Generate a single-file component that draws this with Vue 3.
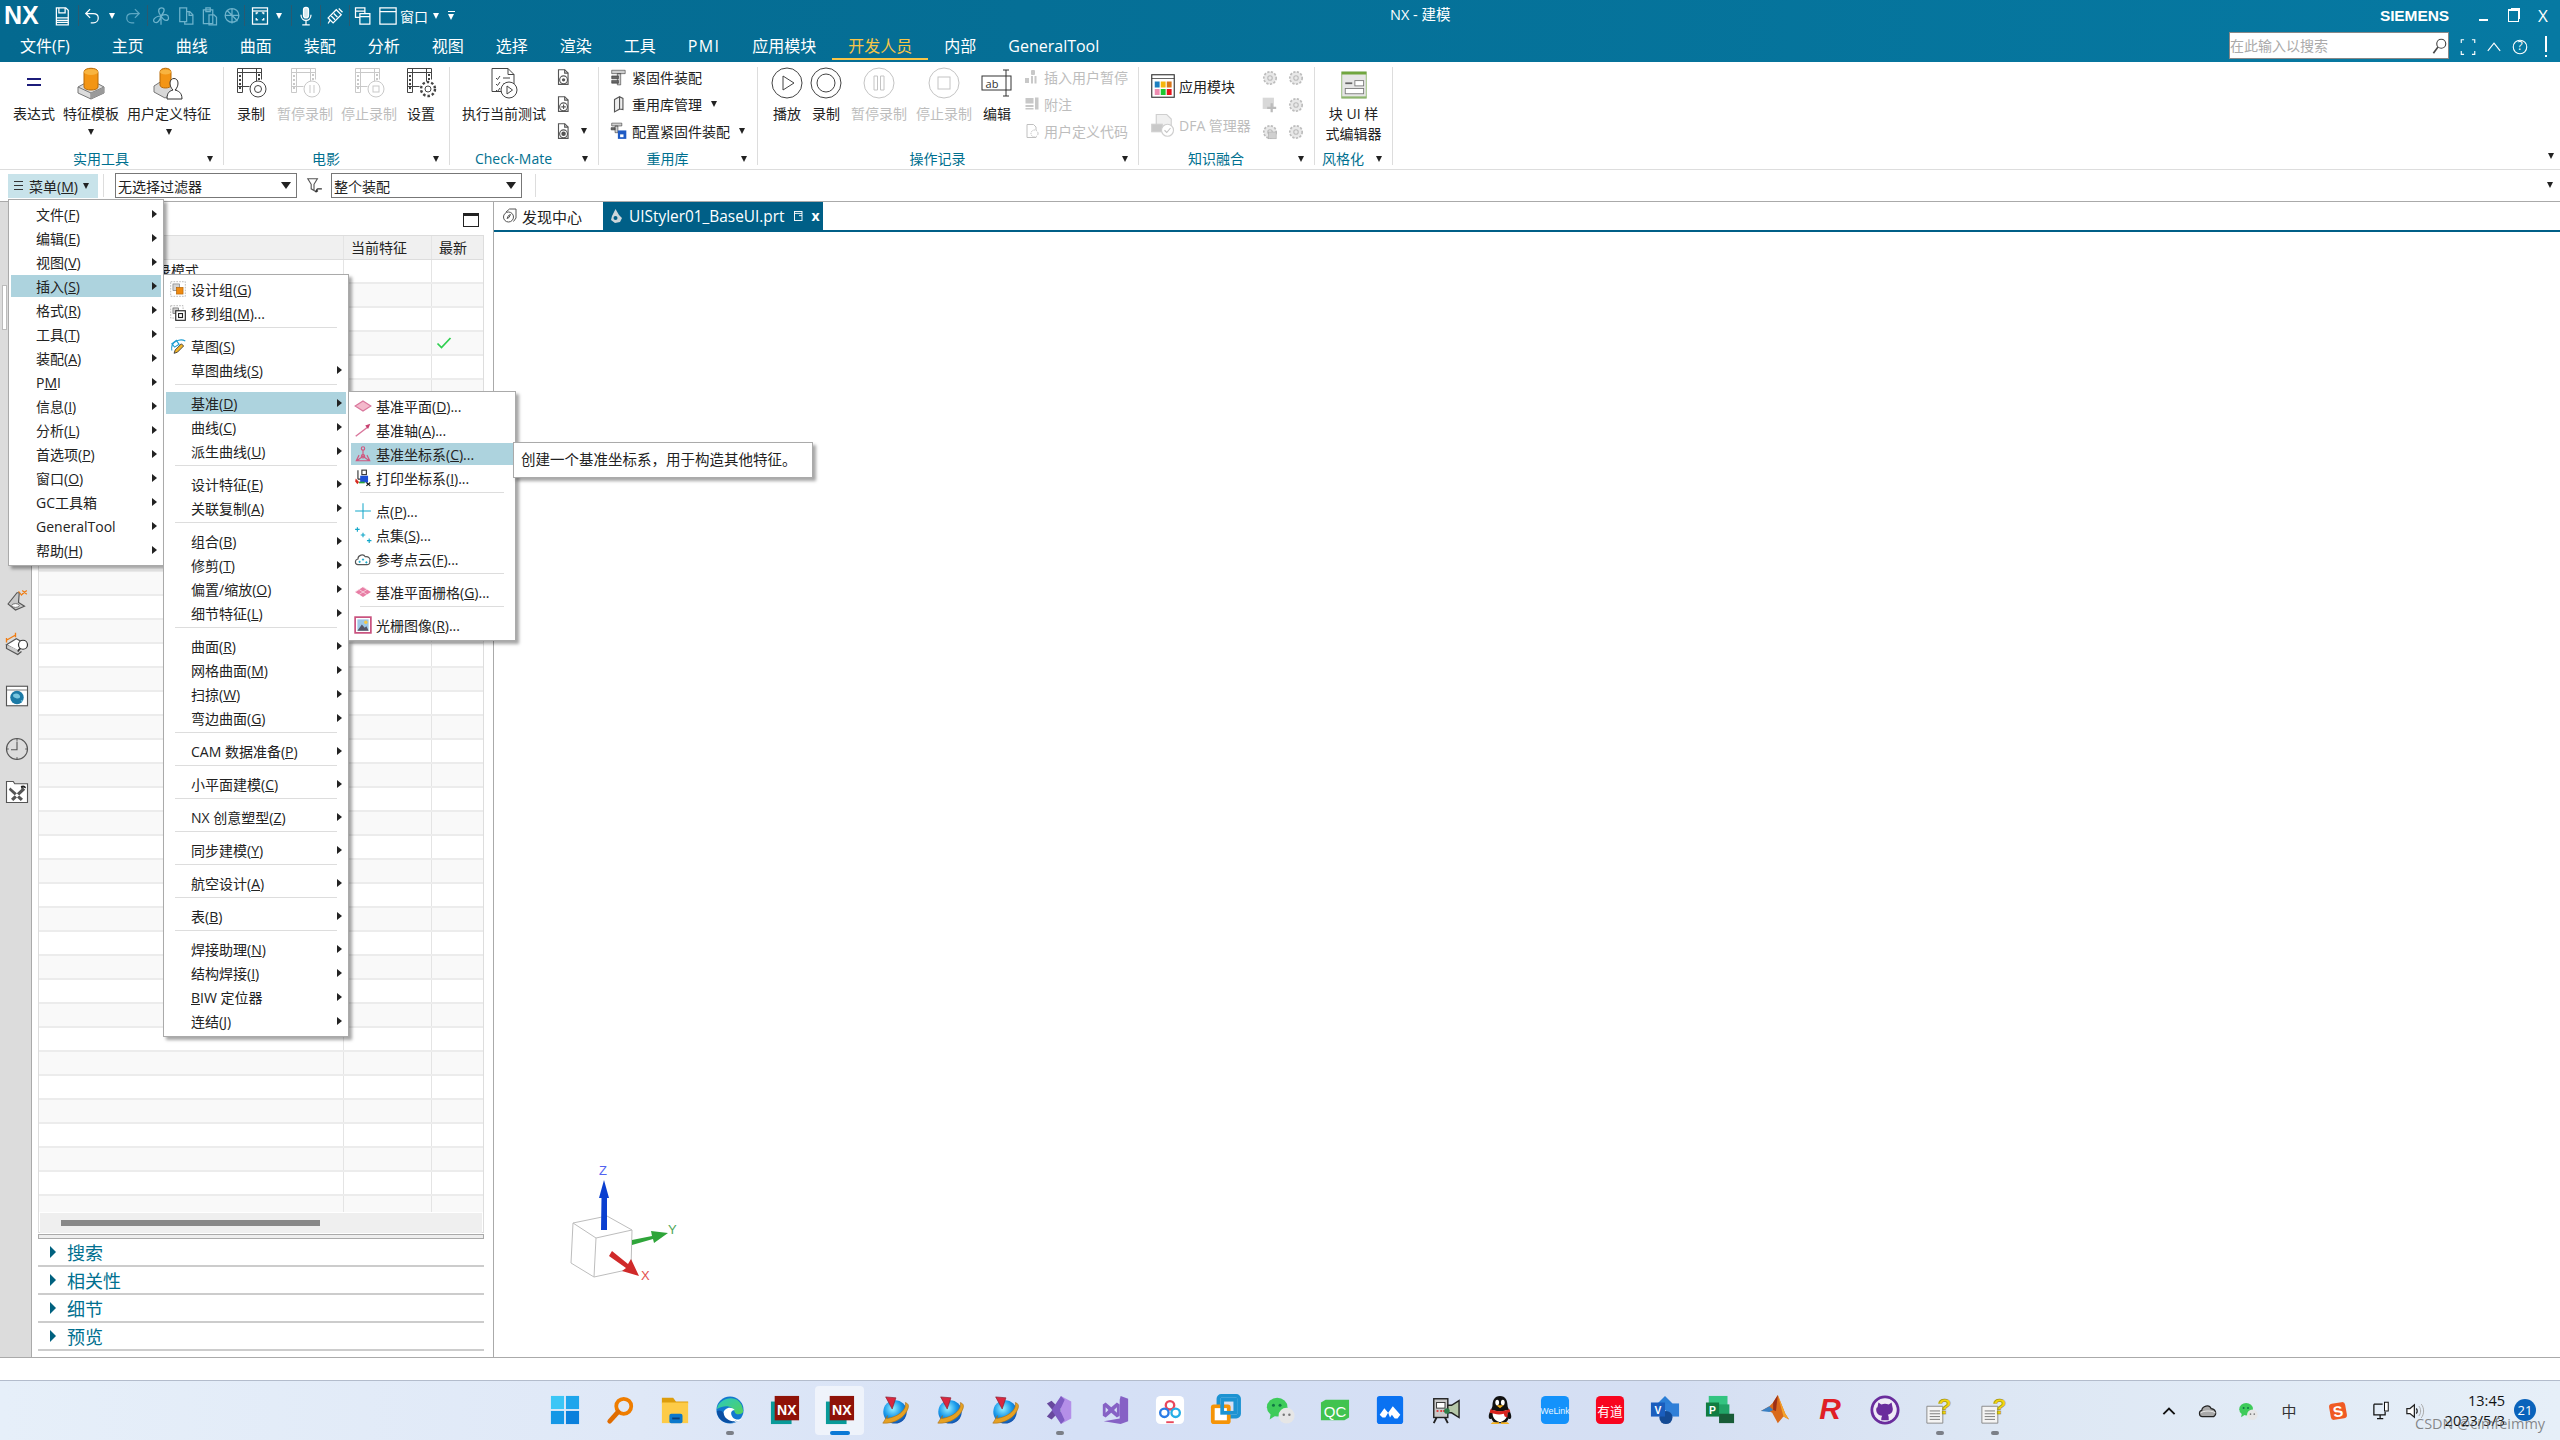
<script setup>
const fontAttr = `font-family="Open Sans, Noto Sans CJK SC, sans-serif"`
const film = (c, badge = '') => `<g fill="none" stroke="${c}" stroke-width="1"><path d="M2.5 1.5h24M2.5 5.5h24M2.5 19.5h12M2.5 1.5v24M7.5 1.5v24M21.5 1.5v13M26.5 1.5v11M2.5 25.5h5"/><path d="M4 9h2M4 13h2M4 17h2M4 21h2M23 8h2M23 12h2" stroke-width="2"/>${badge}</g>`
const doc = (b) => `<g fill="#fff" stroke="#555" stroke-width="2"><path d="M8 3h11l6 6v20H8z"/><path d="M19 3v6h6" fill="none"/><circle cx="17" cy="21" r="7"/></g>${b}`
const gear = (c = '#8a8a8a', b = '') => `<circle cx="16" cy="16" r="11" fill="#e8e8e8" stroke="${c}" stroke-width="3" stroke-dasharray="4 2.5"/><circle cx="16" cy="16" r="4" fill="none" stroke="${c}" stroke-width="2"/>${b}`
const globe = `<defs><radialGradient id="gb" cx=".4" cy=".35" r=".75"><stop offset="0" stop-color="#9cf2ff"/><stop offset=".5" stop-color="#1a9bec"/><stop offset="1" stop-color="#103f9c"/></radialGradient></defs><circle cx="16" cy="18" r="12.5" fill="url(#gb)"/><path d="M3 30c12 1 24-6 27-16 1-3 0-5-3-6 2 8-9 16-20 17l1-3z" fill="#e6a123" stroke="#a66a10" stroke-width=".6"/><path d="M6 2l11 1-4 12z" fill="#d9273f" stroke="#7d1020" stroke-width=".6"/>`
const nxTask = (x = '') => `<rect x="1" y="7" width="22" height="24" fill="#089a99"/><rect x="5" y="1" width="26" height="26" fill="#8f1208"/><text x="18" y="21" text-anchor="middle" font-size="15" font-weight="700" fill="#fff" font-family="Liberation Sans, sans-serif">NX</text>${x}`
const wechat = () => `<ellipse cx="13" cy="13" rx="11" ry="10" fill="#3ecb5a"/><path d="M6 20l-1 6 6-4z" fill="#3ecb5a"/><circle cx="9" cy="11" r="1.6" fill="#174"/><circle cx="16" cy="11" r="1.6" fill="#174"/><circle cx="23" cy="22" r="8.5" fill="#e6e6e6"/><circle cx="20" cy="21" r="1.3" fill="#777"/><circle cx="26" cy="21" r="1.3" fill="#777"/>`

const ic = {
  save: `<g fill="none" stroke="#fff" stroke-width="2"><path d="M7 3h15l4 4v23H7z"/><path d="M11 3v8h10V3M7 19h19M7 23h19M7 26h19"/></g>`,
  undo: `<path d="M13 5 6 12l7 7M6 12h12c5 0 8 3 8 7s-3 8-8 8h-4" fill="none" stroke="#fff" stroke-width="2"/>`,
  redo: `<path d="M19 5l7 7-7 7M26 12H14c-5 0-8 3-8 7s3 8 8 8h4" fill="none" stroke="#5da8c4" stroke-width="2"/>`,
  fan: `<g fill="none" stroke="#6eb3cc" stroke-width="2"><path d="M16 16C10 8 12 3 17 3s6 5-1 13zM16 16c8-4 12-2 12 3s-6 7-12-3zM16 16c-2 8-6 12-10 10s-2-9 10-10zM16 16v14"/></g>`,
  copy: `<g fill="none" stroke="#6eb3cc" stroke-width="2"><path d="M6 3h11v22H6z"/><path d="M17 9h5l5 5v15H14v-4M21 9v6h6"/></g>`,
  paste: `<g fill="none" stroke="#6eb3cc" stroke-width="2"><path d="M7 6h15v22H7z"/><path d="M11 3h7v6h-7zM16 14h8l4 4v12H16z"/></g>`,
  cross: `<g fill="none" stroke="#6eb3cc" stroke-width="2"><path d="M5 15a11 11 0 1 0 22 0a11 11 0 1 0-22 0M16 4v24M5 15h22M9 8l16 16"/></g>`,
  fit: `<g fill="none" stroke="#fff" stroke-width="2"><rect x="4" y="3" width="24" height="26"/><path d="M4 8h24"/><path d="M10 13v-2h3M19 11h3v2M10 19v3h3M22 19v3h-3" /></g>`,
  mic: `<g fill="none" stroke="#fff" stroke-width="2"><rect x="12" y="2" width="8" height="17" rx="4" fill="#d5e8ee"/><path d="M8 14c0 12 16 12 16 0M16 24v6M10 30h12"/></g>`,
  tool: `<g fill="none" stroke="#fff" stroke-width="2"><path d="M5 19 18 6l8 8-13 13zM22 4l6 6M8 23l-3 5"/><path d="M10 16l6 6M14 12l6 6" /></g>`,
  stack: `<g fill="none" stroke="#fff" stroke-width="2"><path d="M4 3h15v15H4zM4 8h15"/><path d="M11 12h16v17H11zM11 17h16" fill="#04739a"/></g>`,
  window: `<g fill="none" stroke="#fff" stroke-width="2"><rect x="3" y="3" width="26" height="26"/><path d="M3 9h26"/></g>`,
  feature: `<path d="M3 20 16 13l13 7v6l-13 6-13-6z" fill="#dcdcdc" stroke="#777"/><path d="M3 20l13 6 13-6M16 26v6" fill="none" stroke="#777"/><path d="M16 26v6l13-6v-6z" fill="#9a9a9a"/><path d="M9 5c0-5 14-5 14 0v15c0 4-14 4-14 0z" fill="#f39514" stroke="#b96a06"/><ellipse cx="16" cy="5" rx="7" ry="3" fill="#f8b440"/>`,
  userfeat: `<path d="M1 19 12 12l11 7v6l-11 6-11-6z" fill="#d8d8d8" stroke="#777"/><path d="M7 5c0-5 11-5 11 0v13c0 4-11 4-11 0z" fill="#f39514" stroke="#b96a06"/><ellipse cx="12.5" cy="5" rx="5.5" ry="2.6" fill="#f8b440"/><path d="M14 32c0-7 3-8 6-9-2-2-3-4-3-7 0-6 8-6 8 0 0 3-1 5-3 7 3 1 7 2 7 9z" fill="#fff" stroke="#333"/>`,
  eq: `<path d="M9 12h14M9 18h14" stroke="#1c1c7a" stroke-width="2"/>`,
  filmRec: film('#444', `<circle cx="23" cy="22" r="8" fill="#fff"/><circle cx="23" cy="22" r="3.5"/>`),
  filmPause: film('#c9c9c9', `<circle cx="23" cy="22" r="8" fill="#fff"/><path d="M21 18v8M25 18v8"/>`),
  filmStop: film('#c9c9c9', `<circle cx="23" cy="22" r="8" fill="#fff"/><rect x="20" y="19" width="6" height="6"/>`),
  filmSet: film('#444', `<circle cx="23" cy="22" r="7" fill="#fff" stroke-width="2.4" stroke-dasharray="2.5 2"/><circle cx="23" cy="22" r="3"/>`),
  checklist: `<g fill="#fff" stroke="#444"><path d="M4 1.5h16l6 6v17H4z"/><path d="M20 1.5v6h6" fill="none"/><path d="M8 11l1.5 1.5L12 9M8 17l1.5 1.5L12 15M8 23l1.5 1.5L12 21M15 11h7M15 17h4" fill="none"/><circle cx="21" cy="23" r="8"/></g><path d="M19 19l5.5 4-5.5 4z" fill="#fff" stroke="#444"/>`,
  docGear: doc(`<circle cx="17" cy="21" r="3" fill="#555"/>`),
  docPlus: doc(`<path d="M17 17v8M13 21h8" stroke="#555" stroke-width="2"/>`),
  docRec: doc(`<circle cx="17" cy="21" r="4" fill="#555"/>`),
  fastener: `<g fill="#666" stroke="#333"><path d="M3 4h24v6H3zM13 10h6v20h-6z" fill="#cfcfcf"/><path d="M3 14h12v5H3zM3 22h12v5H3z"/></g>`,
  reuse: `<g fill="#eee" stroke="#555" stroke-width="2"><path d="M8 8l9-5v22l-9 5zM17 3l6 3v20l-6-1"/></g>`,
  fastConf: `<g fill="#666" stroke="#333"><path d="M3 2h18v5H3zM9 7h5v12H9z" fill="#cfcfcf"/><path d="M2 10h7v4H2z"/></g><rect x="14" y="15" width="15" height="15" fill="#1f5bc4"/><rect x="18" y="22" width="6" height="5" fill="#fff"/>`,
  play: `<circle cx="16" cy="16" r="15" fill="none" stroke="#444"/><path d="M12 9l11 7-11 7z" fill="none" stroke="#444"/>`,
  rec: `<circle cx="16" cy="16" r="15" fill="none" stroke="#444"/><circle cx="16" cy="16" r="9" fill="none" stroke="#444"/>`,
  pause: `<circle cx="16" cy="16" r="15" fill="none" stroke="#c4c4c4"/><path d="M11 9h3.5v14H11zM17.5 9H21v14h-3.5z" fill="none" stroke="#c4c4c4"/>`,
  stop: `<circle cx="16" cy="16" r="15" fill="none" stroke="#c4c4c4"/><rect x="10" y="10" width="12" height="12" fill="none" stroke="#c4c4c4"/>`,
  ab: `<g fill="none" stroke="#333"><rect x="1" y="9" width="29" height="14"/><path d="M22 3h6M25 3v26M22 29h6"/></g><text x="11" y="21" text-anchor="middle" font-size="11" fill="#333" ${fontAttr}>ab</text>`,
  insPause: `<g fill="#c8c8c8"><rect x="14" y="2" width="8" height="10" rx="2"/><rect x="2" y="18" width="8" height="10"/><rect x="14" y="14" width="4" height="15"/><rect x="21" y="14" width="4" height="15"/></g>`,
  note: `<g fill="#c8c8c8"><rect x="3" y="4" width="16" height="11"/><rect x="22" y="3" width="7" height="24"/><rect x="3" y="18" width="16" height="4"/><rect x="3" y="24" width="16" height="3"/></g>`,
  userCode: `<g fill="#fff" stroke="#c0c0c0" stroke-width="2"><path d="M6 3h13l5 5v21H6z"/><circle cx="21" cy="21" r="7" stroke-dasharray="3 2"/></g>`,
  app: `<rect x="1" y="1" width="30" height="30" fill="#fff" stroke="#333" stroke-width="1.5"/><path d="M1 6h30" stroke="#333"/><rect x="5" y="10" width="6.5" height="8" fill="#1d7fc0"/><rect x="13" y="10" width="6.5" height="8" fill="#f5b60d"/><rect x="21" y="10" width="6.5" height="8" fill="#d9771a"/><rect x="5" y="20" width="6.5" height="8" fill="#ee8cb1"/><rect x="13" y="20" width="6.5" height="8" fill="#1cc52f"/><rect x="21" y="20" width="6.5" height="8" fill="#e8141c"/>`,
  dfa: `<g fill="#f0f0f0" stroke="#cfcfcf" stroke-width="1.5"><path d="M7 2h14l6 6v14H7z"/><rect x="1" y="15" width="14" height="10" fill="#c9c9c9"/><circle cx="22" cy="23" r="8" fill="#fff"/></g><path d="M18 23l3 3 5-6" fill="none" stroke="#c4c4c4" stroke-width="1.5"/>`,
  kGear1: gear('#bdbdbd'),
  kPlus: `<rect x="3" y="3" width="20" height="20" fill="#d8d8d8"/><path d="M19 13v16M11 21h16" stroke="#bbb" stroke-width="4"/>`,
  kLock: gear('#bdbdbd', `<rect x="13" y="16" width="14" height="12" fill="#d0d0d0" stroke="#aaa"/>`),
  blockui: `<rect x="2" y="1" width="28" height="30" fill="#e6e6e6" stroke="#8db56e"/><rect x="2" y="1" width="28" height="3" fill="#71a63f"/><rect x="2" y="29" width="28" height="2" fill="#8db56e"/><path d="M6 14h8" stroke="#666" stroke-width="2"/><rect x="17" y="11" width="10" height="6" fill="#fff" stroke="#777"/><rect x="6" y="20" width="21" height="6" fill="#fff" stroke="#777"/>`,
  funnel: `<path d="M5 3h17l-6 10v11l-5-3v-8z" fill="none" stroke="#555" stroke-width="2"/><path d="M30 21h-7c-2 0-3 3-3 6M20 27l-3-3M20 27l3-3" fill="none" stroke="#333" stroke-width="2"/>`,
  discover: `<g fill="none" stroke="#555" stroke-width="2"><circle cx="13" cy="18" r="10"/><path d="M8 8l7-6h13v18l-5 7"/><path d="M10 21l3-6 4-2-3 6z"/></g>`,
  partIcon: `<path d="M15 2l7 12 6 6-4 8-10 2-8-6 2-8z" fill="#cdd6da"/><circle cx="15" cy="20" r="4" fill="#005f87"/>`,
  pinWin: `<g fill="none" stroke="#fff" stroke-width="2.5"><rect x="4" y="4" width="20" height="24"/><path d="M4 9h20M16 15h8"/></g>`,
  check: `<path d="M3 17l8 8L29 6" fill="none" stroke="#2fcf4f" stroke-width="3.5"/>`,
  designGroup: `<rect x="3" y="3" width="26" height="26" fill="#fff" stroke="#888" stroke-dasharray="3 2"/><rect x="7" y="7" width="12" height="12" fill="#d5d5d5" stroke="#666"/><rect x="13" y="13" width="12" height="12" fill="#ef8a10" stroke="#a85c00"/>`,
  moveGroup: `<rect x="3" y="3" width="22" height="22" fill="#fff" stroke="#888" stroke-dasharray="3 2"/><rect x="7" y="7" width="10" height="10" fill="#ccc" stroke="#444"/><rect x="12" y="12" width="17" height="17" fill="#fff" stroke="#222" stroke-width="2"/><rect x="17" y="17" width="7" height="7" fill="none" stroke="#222" stroke-width="2"/>`,
  sketch: `<path d="M5 24C2 8 20 2 29 7" fill="none" stroke="#1d9ed1" stroke-width="2"/><path d="M13 6l-8 6 5 6 8-5z" fill="none" stroke="#1d9ed1" stroke-width="2"/><path d="M9 29l2-6 11-11 4 4-11 11z" fill="#f3b528" stroke="#333" stroke-width="1.5"/>`,
  plane: `<path d="M16 7l14 9-14 9-14-9z" fill="#f3b8cb" stroke="#d9759b" stroke-width="2"/>`,
  axis: `<path d="M3 27 24 11" stroke="#d9759b" stroke-width="2.5"/><path d="M29 5l-9 3 5 6z" fill="#c7406f"/>`,
  csys: `<g fill="none" stroke="#d0577f" stroke-width="2"><circle cx="16" cy="6" r="3"/><path d="M16 9v11L5 28M16 20l11 8M9 18l-5 10h24l-5-10"/><circle cx="16" cy="20" r="3"/></g>`,
  printCsys: `<path d="M7 2v16M7 18h16" stroke="#333" stroke-width="2"/><rect x="14" y="2" width="8" height="8" fill="none" stroke="#333" stroke-width="2"/><path d="M3 17l6 6-3 4-4-5z" fill="#d6291f"/><rect x="11" y="12" width="14" height="12" fill="#1d4fd6"/><path d="M22 24l7 6M29 24l-7 6" stroke="#111" stroke-width="2"/><path d="M9 24h10" stroke="#2aa13c" stroke-width="3"/>`,
  point: `<path d="M16 2v28M2 16h28" stroke="#12a7c9" stroke-width="1.8"/>`,
  points: `<path d="M6 2v8M2 6h8M16 12v8M12 16h8M27 22v8M23 26h8" stroke="#12a7c9" stroke-width="2"/>`,
  cloudPts: `<path d="M7 26C1 26 1 17 7 16c0-7 10-10 13-4 6-1 10 4 8 8 1 4-2 6-5 6z" fill="none" stroke="#555" stroke-width="2"/><path d="M10 19v4M8 21h4M16 15v4M14 17h4M22 20v4M20 22h4" stroke="#12a7c9" stroke-width="1.6"/>`,
  planeGrid: `<path d="M16 7l14 9-14 9-14-9z" fill="#e87ea5"/><path d="M9 11.5l14 9M16 7l7 4.5M9 20.5l14-9M2 16l7-4.5" stroke="#f8d5e1" stroke-width="1.5"/>`,
  raster: `<rect x="2" y="2" width="28" height="28" fill="#fff" stroke="#c8507d" stroke-width="3"/><rect x="6" y="6" width="20" height="20" fill="#9cc6e6"/><path d="M6 26l8-11 5 6 3-3 4 8z" fill="#556"/><circle cx="21" cy="11" r="3" fill="#f6c844"/>`,
  rail1: `<path d="M4 20 16 5h3l-1 13 8 5-12 5z" fill="#c9c9c9" stroke="#555" stroke-width="1.5"/><ellipse cx="14" cy="22" rx="5" ry="2.5" fill="#fff" stroke="#555"/><path d="M18 3l4 5 4-5M23 2l6 5M29 2l-6 5" fill="none" stroke="#ef7d14" stroke-width="1.6"/>`,
  rail2: `<path d="M2 17l13-8 13 7-11 9z" fill="#fff" stroke="#555" stroke-width="1.6"/><path d="M2 17v5l15 8 5-4" fill="#ccc" stroke="#555" stroke-width="1.6"/><path d="M2 11l12-7M2 8v6M14 1v6" stroke="#ef7d14" stroke-width="1.8" fill="none"/><circle cx="24" cy="17" r="6" fill="#fff" stroke="#333" stroke-width="1.6"/><path d="M20 22l-3 4" stroke="#333" stroke-width="2"/>`,
  rail3: `<rect x="2" y="3" width="28" height="26" fill="#fff" stroke="#555" stroke-width="1.5"/><path d="M2 8h28" stroke="#555"/><circle cx="16" cy="18" r="9" fill="#1c7aa6"/><path d="M11 14c4-3 8-1 9 2s-3 4-5 3-5-1-4-5zM21 22l3-1-2 3z" fill="#7ac7e0"/>`,
  rail4: `<circle cx="16" cy="16" r="14" fill="none" stroke="#555" stroke-width="1.5"/><path d="M16 6v11H8M16 2v3M16 27v3M2 16h3M27 16h3" fill="none" stroke="#555" stroke-width="1.5"/>`,
  rail5: `<path d="M2 2h9l2 3h17v25H2z" fill="#fff" stroke="#555" stroke-width="1.5"/><path d="M7 10l17 15-3 3L5 13zM24 10l-16 15 3 3 16-15z" fill="#555"/><path d="M21 8c4-2 7 0 7 3l-4-1-2 2z" fill="#222"/>`,
  /* taskbar */
  win: `<rect x="1" y="1" width="14" height="14" fill="#3bc6f6"/><rect x="17" y="1" width="14" height="14" fill="#1ea5ec"/><rect x="1" y="17" width="14" height="14" fill="#1598e6"/><rect x="17" y="17" width="14" height="14" fill="#0b80dc"/>`,
  tSearch: `<circle cx="20" cy="12" r="8" fill="none" stroke="#ef7d00" stroke-width="4"/><path d="M14 18 5 28" stroke="#e06c00" stroke-width="5" stroke-linecap="round"/>`,
  folder: `<path d="M2 3h12l3 4h13v2H2z" fill="#dd9d0c"/><rect x="2" y="8" width="28" height="22" fill="#fdcb47"/><rect x="10" y="20" width="14" height="10" rx="2" fill="#0b78cc"/><rect x="13" y="24" width="8" height="2" fill="#0a3f78"/>`,
  edge: `<defs><linearGradient id="eg" x1="0" y1="0" x2="1" y2="1"><stop offset="0" stop-color="#2bc8c0"/><stop offset="1" stop-color="#55d25a"/></linearGradient></defs><circle cx="16" cy="16" r="14.5" fill="#1278cf"/><path d="M2 15C4 2 28-3 30 17c0 4-8 5-9 1-1-5-9-9-19-3z" fill="url(#eg)"/><path d="M9 20c0-6 8-9 12-4-4 0-5 4-2 8 3 3 8 3 10 0-4 8-20 6-20-4z" fill="#fff"/><path d="M9 19c1 7 9 11 14 8-5 5-20 4-21-10 2-1 5-1 7 2z" fill="#0a4fa3"/>`,
  nx1: nxTask(),
  globe,
  vs: `<path d="M17 1l11 6v18l-11 6z" fill="#b48fe8"/><path d="M2 9l5-3 10 10 0 0-10 10-5-3 6-7z" fill="#68499e"/><path d="M17 1 7 16l10 15 4-4-5-11 5-11z" fill="#7e5cc2"/>`,
  vs2: `<path d="M22 1l8 3v24l-8 3-18-3 17-3V5z" fill="#8661c5"/><path d="M3 10l3-2 6 5 6-5 3 2v12l-3 2-6-5-6 5-3-2zM6 13v6l3-3zM15 16l3 3v-6z" fill="#8661c5" fill-rule="evenodd"/>`,
  baidu: `<rect x="1" y="1" width="30" height="30" rx="5" fill="#fff"/><circle cx="16" cy="11" r="4.5" fill="none" stroke="#e9475b" stroke-width="2.5"/><circle cx="10" cy="19" r="4.5" fill="none" stroke="#2a7be6" stroke-width="2.5"/><circle cx="22" cy="19" r="4.5" fill="none" stroke="#26aee6" stroke-width="2.5"/><rect x="12" y="28" width="8" height="2" fill="#e9475b"/>`,
  squares: `<rect x="9" y="1" width="22" height="22" rx="3" fill="none" stroke="#1d93d2" stroke-width="4"/><rect x="1" y="10" width="21" height="21" rx="3" fill="#f59408"/><rect x="5" y="14" width="13" height="13" fill="#fff"/><rect x="13" y="5" width="14" height="14" fill="none" stroke="#1d93d2" stroke-width="4"/>`,
  wechat: wechat(),
  qc: `<path d="M1 8l5-3h25v19l-5 3H1z" fill="#41c34f"/><text x="16" y="23" text-anchor="middle" font-size="16" fill="#fff" font-family="Liberation Sans, sans-serif">QC</text>`,
  lanhu: `<rect x="2" y="1" width="28" height="30" rx="3" fill="#0a72f2"/><path d="M5 21l5-7 4 5-3 5H8zM14 19l5-7 8 9-3 4-3 0-3-4-2 3z" fill="#fff"/>`,
  cam: `<rect x="4" y="4" width="15" height="20" fill="#c9c9c9" stroke="#222" stroke-width="1.5"/><rect x="7" y="8" width="9" height="6" fill="#fff" stroke="#333"/><path d="M7 17h2M11 17h2M14 17h2" stroke="#e04040" stroke-width="2"/><path d="M19 11h4l8-5v18l-8-5h-4z" fill="#b5c7a9" stroke="#222" stroke-width="1.5"/><path d="M7 24l-3 6M16 24l3 6" stroke="#222" stroke-width="2"/><circle cx="18" cy="17" r="3" fill="#2f7d4a"/>`,
  qq: `<path d="M16 1c-6 0-8 5-8 10 0 3-4 8-4 12 0 3 2 3 3 2 1 4 4 5 9 5s8-1 9-5c1 1 3 1 3-2 0-4-4-9-4-12 0-5-2-10-8-10z" fill="#111"/><path d="M9 16c2 2 12 2 14 0 2 4 1 11-7 13-8-2-9-9-7-13z" fill="#fff"/><path d="M6 15c5 3 15 3 20 0l1 3-3 1 0 5-3-1-1-3c-3 1-7 1-10 0l-5-1z" fill="#d8221c"/><ellipse cx="13" cy="8" rx="2" ry="3" fill="#fff"/><ellipse cx="19" cy="8" rx="2" ry="3" fill="#fff"/><path d="M12 11h8l-4 3z" fill="#f5b21f"/><path d="M8 29h7v2H6zM17 29h7l2 2h-9z" fill="#f5b21f"/>`,
  welink: `<rect x="1" y="1" width="30" height="30" rx="5" fill="#1392fb"/><text x="16" y="20" text-anchor="middle" font-size="9.5" fill="#e6f5ff" font-family="Liberation Sans, sans-serif">WeLink</text>`,
  youdao: `<rect x="1" y="1" width="30" height="30" rx="5" fill="#f8051f"/><text x="16" y="22" text-anchor="middle" font-size="13.5" fill="#fff" font-family="Noto Sans CJK SC, sans-serif">有道</text>`,
  visio: `<path d="M16 1l8 8-8 8-8-8z" fill="#2b7ed6"/><rect x="17" y="9" width="14" height="14" fill="#2f7fd8"/><circle cx="17" cy="24" r="7" fill="#144a94"/><rect x="1" y="8" width="15" height="15" fill="#1a5dbd"/><text x="8.5" y="20" text-anchor="middle" font-size="11" font-weight="700" fill="#fff" font-family="Liberation Sans, sans-serif">V</text>`,
  project: `<rect x="4" y="1" width="20" height="10" fill="#33c481"/><rect x="12" y="10" width="14" height="11" fill="#21a366"/><rect x="15" y="20" width="16" height="10" fill="#185c37"/><rect x="1" y="8" width="14" height="15" fill="#107c41"/><text x="8" y="20" text-anchor="middle" font-size="11" font-weight="700" fill="#fff" font-family="Liberation Sans, sans-serif">P</text>`,
  matlab: `<path d="M1 17l9-5 4-4 5-8 8 20 4 6-6-3-6 7-6-11-4-2z" fill="#d96a1c"/><path d="M19 0l8 20 4 6-6-3z" fill="#f4a32a"/><path d="M1 17l9-5 4 4-4 2z" fill="#3a80c4"/><path d="M14 8l5-8-2 17-3-1z" fill="#9c2f17"/>`,
  r: `<text x="16" y="26" text-anchor="middle" font-size="32" font-weight="700" font-style="italic" fill="#e01f26" font-family="Liberation Sans, sans-serif">R</text>`,
  github: `<circle cx="16" cy="16" r="14" fill="none" stroke="#6a2c9c" stroke-width="3"/><circle cx="16" cy="16" r="12" fill="#f0eaf6"/><path d="M9 8l3 2c3-1 5-1 8 0l3-2 1 5c1 3 0 7-5 8 1 1 1 3 1 6h-8c0-2 0-3 1-5-2 0-5-1-6-4s0-5 1-5z" fill="#6a2c9c"/>`,
  docq: `<path d="M2 12h17v18H2z" fill="#f4f4f4" stroke="#888"/><path d="M5 17h11M5 20h11M5 23h11M5 26h11" stroke="#777"/><text x="21" y="20" text-anchor="middle" font-size="24" font-weight="700" fill="#f3d60d" stroke="#8a7a00" stroke-width=".5" font-family="Liberation Sans, sans-serif">?</text>`,
  chev: `<path d="M7 21l9-9 9 9" fill="none" stroke="#111" stroke-width="3"/>`,
  cloud: `<path d="M7 25C1 25 1 16 6 15c1-7 12-10 15-3 7 0 10 9 4 13z" fill="#a9a9a9" stroke="#222" stroke-width="2"/><path d="M4 19c6-4 18-4 24 0" stroke="#eee" stroke-width="1.5" fill="none"/>`,
  zhong: `<text x="16" y="25" text-anchor="middle" font-size="24" fill="#333" font-family="Noto Sans CJK SC, sans-serif">中</text>`,
  sogou: `<g transform="rotate(-10 16 16)"><rect x="3" y="3" width="26" height="26" rx="5" fill="#f05a23"/><text x="16" y="25" text-anchor="middle" font-size="24" font-weight="700" fill="#fff" font-family="Liberation Sans, sans-serif">S</text></g>`,
  monitor: `<path d="M3 5h14M3 5v17h18v-5M8 28h10M13 22v6" fill="none" stroke="#111" stroke-width="2"/><rect x="20" y="2" width="6" height="14" fill="#fff" stroke="#111" stroke-width="1.6"/>`,
  speaker: `<path d="M3 12h5l7-6v20l-7-6H3z" fill="#fff" stroke="#222" stroke-width="2"/><path d="M18 12c2 2 2 6 0 8" fill="none" stroke="#222" stroke-width="2"/><path d="M22 8c4 4 4 12 0 16M26 5c5 6 5 16 0 22" fill="none" stroke="#aaa" stroke-width="1.6"/>`
}

const qa = [
  { n: 'save', w: 32 }, { sep: 1 },
  { n: 'undo', w: 26 }, { arrow: 1, w: 14 }, { n: 'redo', w: 28 }, { sep: 1 },
  { n: 'fan', w: 26 }, { n: 'copy', w: 23 }, { n: 'paste', w: 23 }, { n: 'cross', w: 24 }, { sep: 1 },
  { n: 'fit', w: 29 }, { arrow: 1, w: 10 }, { w: 7 }, { sep: 1 },
  { n: 'mic', w: 28 }, { sep: 1 }, { n: 'tool', w: 28 }, { sep: 1 },
  { n: 'stack', w: 26 }, { n: 'window', w: 24 }, { text: '窗口', w: 28 }, { arrow: 1, w: 16 }, { more: 1, w: 14 }
]
const tabs = ['主页', '曲线', '曲面', '装配', '分析', '视图', '选择', '渲染', '工具', 'PMI', '应用模块', '开发人员', '内部', 'GeneralTool']

const menu1 = ['文件(_F)', '编辑(_E)', '视图(_V)', '插入(_S)', '格式(_R)', '工具(_T)', '装配(_A)', 'P_MI', '信息(_I)', '分析(_L)', '首选项(_P)', '窗口(_O)', 'GC工具箱', 'GeneralTool', '帮助(_H)']
  .map((t, i) => ({ t, sub: 1, hl: i === 3 }))
const m = (t, sub = 1, icon = '', hl = false) => ({ t, sub, icon, hl })
const SEP = { sep: 1 }
const menu2 = [
  m('设计组(_G)', 0, 'designGroup'), m('移到组(_M)...', 0, 'moveGroup'), SEP,
  m('草图(_S)', 0, 'sketch'), m('草图曲线(_S)'), SEP,
  m('基准(_D)', 1, '', true), m('曲线(_C)'), m('派生曲线(_U)'), SEP,
  m('设计特征(_E)'), m('关联复制(_A)'), SEP,
  m('组合(_B)'), m('修剪(_T)'), m('偏置/缩放(_O)'), m('细节特征(_L)'), SEP,
  m('曲面(_R)'), m('网格曲面(_M)'), m('扫掠(_W)'), m('弯边曲面(_G)'), SEP,
  m('CAM 数据准备(_P)'), SEP, m('小平面建模(_C)'), SEP, m('NX 创意塑型(_Z)'), SEP, m('同步建模(_Y)'), SEP,
  m('航空设计(_A)'), SEP, m('表(_B)'), SEP,
  m('焊接助理(_N)'), m('结构焊接(_I)'), m('_BIW 定位器'), m('连结(_J)')
]
const menu3 = [
  m('基准平面(_D)...', 0, 'plane'), m('基准轴(_A)...', 0, 'axis'), m('基准坐标系(_C)...', 0, 'csys', true), m('打印坐标系(_I)...', 0, 'printCsys'), SEP,
  m('点(_P)...', 0, 'point'), m('点集(_S)...', 0, 'points'), m('参考点云(_F)...', 0, 'cloudPts'), SEP,
  m('基准平面栅格(_G)...', 0, 'planeGrid'), SEP, m('光栅图像(_R)...', 0, 'raster')
]
const split = (s) => {
  const r = /^(.*?)_(.)(.*)$/.exec(s)
  return r ? [r[1], r[2], r[3]] : [s, '', '']
}
const menus = [
  { cls: 'menu-a', items: menu1 },
  { cls: 'menu-b', items: menu2 },
  { cls: 'menu-c', items: menu3 }
]
const rows = Array.from({ length: 40 }, (_, i) => i)
const task = [
  { n: 'win' }, { n: 'tSearch' }, { n: 'folder' }, { n: 'edge', dot: 1 }, { n: 'nx1' }, { n: 'nx1', active: 1 },
  { n: 'globe' }, { n: 'globe' }, { n: 'globe' }, { n: 'vs', dot: 1 }, { n: 'vs2' }, { n: 'baidu' }, { n: 'squares' },
  { n: 'wechat' }, { n: 'qc' }, { n: 'lanhu' }, { n: 'cam' }, { n: 'qq' }, { n: 'welink' }, { n: 'youdao' },
  { n: 'visio' }, { n: 'project' }, { n: 'matlab' }, { n: 'r' }, { n: 'github' }, { n: 'docq', dot: 1 }, { n: 'docq', dot: 1 }
]
const tray = [
  { n: 'chev', w: 38 }, { n: 'cloud', w: 40 }, { n: 'wechat', w: 40 }, { n: 'zhong', w: 42 },
  { n: 'sogou', w: 56 }, { n: 'monitor', w: 32 }, { n: 'speaker', w: 34 }
]
</script>

<template>
  <div class="app">
    <!-- title + tabs -->
    <header class="head">
      <div class="title-row">
        <span class="nx">NX</span>
        <template v-for="(q, i) in qa" :key="i">
          <span v-if="q.sep" class="qa-sep"></span>
          <span v-else class="qa-slot" :style="{ width: q.w + 'px' }">
            <svg v-if="q.n" class="i20" viewBox="0 0 32 32" v-html="ic[q.n]"></svg>
            <span v-else-if="q.text" class="qa-text">{{ q.text }}</span>
            <span v-else-if="q.arrow" class="tri tri-w"></span>
            <span v-else-if="q.more" class="more"><i></i><span class="tri tri-w"></span></span>
          </span>
        </template>
        <span class="title">NX - 建模</span>
        <span class="siemens">SIEMENS</span>
        <span class="win-btns">
          <span class="wb"><i class="wb-min"></i></span>
          <span class="wb"><i class="wb-max"></i></span>
          <span class="wb wb-x">X</span>
        </span>
      </div>
      <div class="tab-row">
        <span class="tab tab-file">文件(F)</span>
        <span v-for="t in tabs" :key="t" class="tab" :class="{ active: t === '开发人员', pmi: t === 'PMI' }">{{ t }}</span>
        <div class="search">
          <span class="search-text">在此输入以搜索</span>
          <svg class="i18" viewBox="0 0 32 32"><circle cx="20" cy="12" r="8" fill="#fff" stroke="#444" stroke-width="2"/><path d="M14 18 6 29" stroke="#444" stroke-width="3"/></svg>
        </div>
        <span class="hd-ic">
          <svg class="i18" viewBox="0 0 32 32"><path d="M9 3H4v6M23 3h5v6M9 29H4v-6M23 29h5v-6" fill="none" stroke="#fff" stroke-width="2"/></svg>
        </span>
        <span class="hd-ic">
          <svg class="i18" viewBox="0 0 32 32"><path d="M5 23 16 9l11 14" fill="none" stroke="#fff" stroke-width="2"/></svg>
        </span>
        <span class="hd-ic">
          <svg class="i18" viewBox="0 0 32 32"><circle cx="16" cy="16" r="12" fill="none" stroke="#fff" stroke-width="2"/></svg><b class="q">?</b>
        </span>
        <span class="hd-ic bang"><i></i><i></i></span>
      </div>
    </header>

    <!-- ribbon -->
    <section class="ribbon">
      <div class="group g1">
        <div class="g-body">
          <div class="btn w52"><svg class="i32" viewBox="0 0 32 32" v-html="ic.eq"></svg><span>表达式</span></div>
          <div class="btn w62"><svg class="i32" viewBox="0 0 32 32" v-html="ic.feature"></svg><span>特征模板</span><i class="tri"></i></div>
          <div class="btn w94"><svg class="i32" viewBox="0 0 32 32" v-html="ic.userfeat"></svg><span>用户定义特征</span><i class="tri"></i></div>
        </div>
        <div class="g-foot"><span>实用工具</span><i class="tri"></i></div>
      </div>
      <div class="group g2">
        <div class="g-body">
          <div class="btn w38"><svg class="i32" viewBox="0 0 32 32" v-html="ic.filmRec"></svg><span>录制</span></div>
          <div class="btn w70 off"><svg class="i32" viewBox="0 0 32 32" v-html="ic.filmPause"></svg><span>暂停录制</span></div>
          <div class="btn w58 off"><svg class="i32" viewBox="0 0 32 32" v-html="ic.filmStop"></svg><span>停止录制</span></div>
          <div class="btn w46"><svg class="i32" viewBox="0 0 32 32" v-html="ic.filmSet"></svg><span>设置</span></div>
        </div>
        <div class="g-foot"><span>电影</span><i class="tri"></i></div>
      </div>
      <div class="group g3">
        <div class="g-body">
          <div class="btn w92"><svg class="i32" viewBox="0 0 32 32" v-html="ic.checklist"></svg><span>执行当前测试</span></div>
          <div class="rows icons-only">
            <div class="r"><svg class="i18" viewBox="0 0 32 32" v-html="ic.docGear"></svg></div>
            <div class="r"><svg class="i18" viewBox="0 0 32 32" v-html="ic.docPlus"></svg></div>
            <div class="r"><svg class="i18" viewBox="0 0 32 32" v-html="ic.docRec"></svg><i class="tri r-tri"></i></div>
          </div>
        </div>
        <div class="g-foot"><span>Check-Mate</span><i class="tri"></i></div>
      </div>
      <div class="group g4">
        <div class="g-body">
          <div class="rows">
            <div class="r"><span class="slot20"><svg class="i18" viewBox="0 0 32 32" v-html="ic.fastener"></svg></span><span class="rt">紧固件装配</span></div>
            <div class="r"><span class="slot20"><svg class="i18" viewBox="0 0 32 32" v-html="ic.reuse"></svg></span><span class="rt">重用库管理</span><i class="tri r-tri"></i></div>
            <div class="r"><span class="slot20"><svg class="i18" viewBox="0 0 32 32" v-html="ic.fastConf"></svg></span><span class="rt">配置紧固件装配</span><i class="tri r-tri"></i></div>
          </div>
        </div>
        <div class="g-foot"><span>重用库</span><i class="tri"></i></div>
      </div>
      <div class="group g5">
        <div class="g-body">
          <div class="btn w44"><svg class="i32" viewBox="0 0 32 32" v-html="ic.play"></svg><span>播放</span></div>
          <div class="btn w34"><svg class="i32" viewBox="0 0 32 32" v-html="ic.rec"></svg><span>录制</span></div>
          <div class="btn w72 off"><svg class="i32" viewBox="0 0 32 32" v-html="ic.pause"></svg><span>暂停录制</span></div>
          <div class="btn w58 off"><svg class="i32" viewBox="0 0 32 32" v-html="ic.stop"></svg><span>停止录制</span></div>
          <div class="btn w48"><svg class="i32" viewBox="0 0 32 32" v-html="ic.ab"></svg><span>编辑</span></div>
          <div class="rows off small-rows">
            <div class="r"><svg class="i16" viewBox="0 0 32 32" v-html="ic.insPause"></svg><span class="rt">插入用户暂停</span></div>
            <div class="r"><svg class="i16" viewBox="0 0 32 32" v-html="ic.note"></svg><span class="rt">附注</span></div>
            <div class="r"><svg class="i16" viewBox="0 0 32 32" v-html="ic.userCode"></svg><span class="rt">用户定义代码</span></div>
          </div>
        </div>
        <div class="g-foot"><span>操作记录</span><i class="tri"></i></div>
      </div>
      <div class="group g6">
        <div class="g-body">
          <div class="know">
            <div class="kn"><svg class="i24" viewBox="0 0 32 32" v-html="ic.app"></svg><span>应用模块</span></div>
            <div class="kn off"><svg class="i24" viewBox="0 0 32 32" v-html="ic.dfa"></svg><span>DFA 管理器</span></div>
          </div>
          <div class="kgrid">
            <svg class="i18" viewBox="0 0 32 32" v-html="ic.kGear1"></svg>
            <svg class="i18" viewBox="0 0 32 32" v-html="ic.kGear1"></svg>
            <svg class="i18" viewBox="0 0 32 32" v-html="ic.kPlus"></svg>
            <svg class="i18" viewBox="0 0 32 32" v-html="ic.kGear1"></svg>
            <svg class="i18" viewBox="0 0 32 32" v-html="ic.kLock"></svg>
            <svg class="i18" viewBox="0 0 32 32" v-html="ic.kGear1"></svg>
          </div>
        </div>
        <div class="g-foot"><span>知识融合</span><i class="tri"></i></div>
      </div>
      <div class="group g7">
        <div class="g-body">
          <div class="btn w77"><svg class="i32 ui-ic" viewBox="0 0 32 32" v-html="ic.blockui"></svg><span>块 UI 样<br />式编辑器</span></div>
        </div>
        <div class="g-foot"><span>风格化</span><i class="tri"></i></div>
      </div>
      <i class="tri rib-end"></i>
    </section>

    <!-- selection bar -->
    <section class="selbar">
      <div class="menu-btn"><span class="burger"><i></i><i></i><i></i></span><span>菜单(<u>M</u>)</span><i class="tri"></i></div>
      <span class="sel-sep"></span>
      <div class="select s1"><span>无选择过滤器</span><i class="tri tri-l"></i></div>
      <svg class="i22 funnel" viewBox="0 0 32 32" v-html="ic.funnel"></svg>
      <div class="select s2"><span>整个装配</span><i class="tri tri-l"></i></div>
      <span class="sel-sep s3"></span>
      <i class="tri sel-end"></i>
    </section>

    <!-- main -->
    <main class="main">
      <aside class="rail">
        <span class="stub"></span>
        <svg class="i24 rc" viewBox="0 0 32 32" v-html="ic.rail4"></svg>
        <svg class="i24 r1" viewBox="0 0 32 32" v-html="ic.rail1"></svg>
        <svg class="i24 r2" viewBox="0 0 32 32" v-html="ic.rail2"></svg>
        <svg class="i24 r3" viewBox="0 0 32 32" v-html="ic.rail3"></svg>
        <svg class="i24 r4" viewBox="0 0 32 32" v-html="ic.rail4"></svg>
        <svg class="i24 r5" viewBox="0 0 32 32" v-html="ic.rail5"></svg>
      </aside>
      <section class="panel">
        <div class="panel-top"><span class="max-ic"></span></div>
        <div class="table">
          <div class="t-head"><span class="c1"></span><span class="c2">当前特征</span><span class="c3">最新</span></div>
          <div class="t-body">
            <div v-for="i in rows" :key="i" class="t-row" :class="{ odd: i % 2 === 1 }">
              <span class="c1"><template v-if="i === 0">历史记录模式</template></span>
              <span class="c2"></span>
              <span class="c3"><svg v-if="i === 3" class="i16" viewBox="0 0 32 32" v-html="ic.check"></svg></span>
            </div>
          </div>
          <div class="t-scroll"><span></span></div>
        </div>
        <div class="splitter"></div>
        <div v-for="s in ['搜索', '相关性', '细节', '预览']" :key="s" class="sect"><i></i><span>{{ s }}</span></div>
      </section>
      <section class="canvas">
        <div class="doc-tabs">
          <div class="dt"><svg class="i16" viewBox="0 0 32 32" v-html="ic.discover"></svg><span>发现中心</span></div>
          <div class="dt on">
            <svg class="i16" viewBox="0 0 32 32" v-html="ic.partIcon"></svg><span>UIStyler01_BaseUI.prt</span>
            <svg class="i12" viewBox="0 0 32 32" v-html="ic.pinWin"></svg><b>x</b>
          </div>
        </div>
        <svg class="triad" viewBox="0 0 120 130">
          <g fill="none" stroke="#bdbdbd" stroke-width="1">
            <path d="M9 67 43 60 68 74 32 82ZM9 67 7 107 30 121 32 82M30 121 67 113 68 74"/>
          </g>
          <path d="M40 24 35 42 37.500 42 37 74 43 74 43 42 45 42Z" fill="#0a3fd0"/>
          <path d="M68 84 88 80 87 75 104 77 90 87 89 83 68 89Z" fill="#2fa53a"/>
          <path d="M48 95 64 108 67 103 75 120 58 115 62 112 45 100Z" fill="#d02a2a"/>
          <text x="35" y="19" font-size="13" fill="#5263f0" font-family="Liberation Sans, sans-serif">Z</text>
          <text x="104" y="78" font-size="13" fill="#4fa85a" font-family="Liberation Sans, sans-serif">Y</text>
          <text x="77" y="124" font-size="13" fill="#e25050" font-family="Liberation Sans, sans-serif">X</text>
        </svg>
      </section>
    </main>
    <div class="status"></div>

    <!-- taskbar -->
    <footer class="taskbar">
      <div class="t-slot" v-for="(t, i) in task" :key="i" :class="{ active: t.active }">
        <svg class="i30" viewBox="0 0 32 32" v-html="ic[t.n]"></svg>
        <i v-if="t.dot" class="dot"></i>
        <i v-if="t.active" class="bar"></i>
      </div>
      <div class="tray">
        <span v-for="t in tray" :key="t.n" class="tr" :style="{ width: t.w + 'px' }">
          <svg class="i20" viewBox="0 0 32 32" v-html="ic[t.n]"></svg>
        </span>
        <div class="clock"><span>13:45</span><span>2023/5/3</span></div>
        <span class="badge">21</span>
      </div>
      <span class="mark">CSDN @cimfeimmy</span>
    </footer>

    <!-- cascading menus -->
    <div v-for="mn in menus" :key="mn.cls" class="menu" :class="mn.cls">
      <template v-for="(it, i) in mn.items" :key="i">
        <div v-if="it.sep" class="m-sep"></div>
        <div v-else class="m-item" :class="{ hl: it.hl }">
          <span class="m-icon"><svg v-if="it.icon" class="i18" viewBox="0 0 32 32" v-html="ic[it.icon]"></svg></span>
          <span class="m-text">{{ split(it.t)[0] }}<u>{{ split(it.t)[1] }}</u>{{ split(it.t)[2] }}</span>
          <i v-if="it.sub" class="tri-r"></i>
        </div>
      </template>
    </div>
    <div class="tip">创建一个基准坐标系，用于构造其他特征。</div>
  </div>
</template>

<style>
html, body { margin: 0; background: #fff; }
</style>

<style scoped>
.app { position: relative; width: 2560px; height: 1440px; overflow: hidden; display: flex; flex-direction: column; font-family: "Open Sans", "Noto Sans CJK SC", sans-serif; font-size: 14px; color: #222; background: #fff; }
svg { display: block; flex: none; overflow: visible; }
.i12 { width: 12px; height: 12px; } .i16 { width: 16px; height: 16px; } .i18 { width: 18px; height: 18px; }
.i20 { width: 20px; height: 20px; } .i22 { width: 22px; height: 22px; } .i24 { width: 24px; height: 24px; }
.i30 { width: 30px; height: 30px; } .i32 { width: 32px; height: 32px; }
.tri { display: block; width: 0; height: 0; border-left: 3.5px solid transparent; border-right: 3.5px solid transparent; border-top: 6px solid #222; flex: none; }
.tri-w { border-top-color: #fff; }
.tri-l { border-left-width: 5px; border-right-width: 5px; border-top-width: 7px; }
.tri-r { display: block; width: 0; height: 0; border-top: 4.5px solid transparent; border-bottom: 4.5px solid transparent; border-left: 5px solid #222; margin-left: auto; margin-right: 4px; flex: none; }

.head { height: 62px; flex: none; background: linear-gradient(90deg, #04698f 0%, #056f96 40%, #0679a2 100%); color: #fff; }
.title-row { height: 31px; display: flex; align-items: center; position: relative; }
.nx { width: 46px; padding-left: 4px; box-sizing: border-box; font: 700 25px/31px "Liberation Sans", sans-serif; flex: none; }
.qa-sep { width: 1px; height: 21px; background: #2a5a70; flex: none; }
.qa-slot { display: flex; align-items: center; justify-content: center; height: 31px; flex: none; }
.qa-text { font-size: 14px; }
.more { display: flex; flex-direction: column; align-items: center; gap: 2px; }
.more i { display: block; width: 7px; height: 1px; background: #fff; }
.title { position: absolute; left: 1390px; top: 5px; font-size: 14.5px; line-height: 20px; }
.siemens { margin-left: auto; font: 700 15.5px/31px "Liberation Sans", sans-serif; letter-spacing: -.1px; }
.win-btns { display: flex; margin-left: 19px; margin-right: 2px; }
.wb { width: 30px; height: 31px; display: flex; align-items: center; justify-content: center; font-size: 18px; }
.wb-min { display: block; width: 9px; height: 2px; background: #fff; margin-top: 9px; }
.wb-max { display: block; width: 9px; height: 10px; border: 1px solid #fff; border-top-width: 2px; box-shadow: 2px -2px 0 -1px #fff; }
.wb-x { font-size: 17px; }
.tab-row { height: 31px; display: flex; align-items: stretch; padding-left: 4px; }
.tab { padding: 0 16px; font-size: 16px; line-height: 30px; box-sizing: border-box; height: 29px; flex: none; }
.tab-file { margin-right: 10px; }
.tab.pmi { letter-spacing: 1.3px; }
.tab.active { color: #f7c548; border-bottom: 2px solid #f7c548; }
.search { margin-left: auto; width: 218px; height: 25px; margin-top: 1px; background: #fff; border: 1px solid #888; box-sizing: content-box; display: flex; align-items: center; justify-content: space-between; }
.search-text { color: #aaa; font-size: 14px; line-height: 25px; }
.hd-ic { width: 26px; height: 31px; display: flex; align-items: center; justify-content: center; position: relative; flex: none; }
.hd-ic .q { position: absolute; left: 0; right: 0; top: 5px; text-align: center; font-size: 12px; font-weight: 400; line-height: 20px; }
.search + .hd-ic { margin-left: 6px; }
.bang { flex-direction: column; gap: 3px; margin-right: 1px; }
.bang i { display: block; width: 2px; height: 16px; background: #fff; }
.bang i:last-child { height: 2px; }

.ribbon { height: 102px; flex: none; border-bottom: 1px solid #ddd; display: flex; padding-top: 5px; box-sizing: content-box; position: relative; }
.group { box-sizing: border-box; border-right: 1px solid #ddd; height: 98px; display: flex; flex-direction: column; flex: none; }
.g1 { width: 224px; } .g2 { width: 226px; } .g3 { width: 149px; } .g4 { width: 159px; } .g5 { width: 381px; } .g6 { width: 176px; } .g7 { width: 78px; }
.g-body { height: 85px; display: flex; align-items: flex-start; }
.g1 .g-body { padding-left: 8px; } .g2 .g-body { padding-left: 8px; } .g3 .g-body { padding-left: 8px; }
.g4 .g-body { padding-left: 10px; } .g5 .g-body { padding-left: 7px; } .g6 .g-body { padding-left: 12px; }
.g-foot { height: 13px; display: flex; align-items: center; }
.g-foot span { flex: 1; text-align: center; color: #00708f; font-size: 14px; line-height: 13px; white-space: nowrap; }
.g-foot .tri { margin: 0 10px 0 5px; }
.btn { display: flex; flex-direction: column; align-items: center; flex: none; text-align: center; white-space: nowrap; line-height: 20px; }
.btn svg { margin-bottom: 5px; }
.btn .tri { margin-top: 5px; }
.ui-ic { width: 28px; height: 28px; margin-top: 4px; }
.w34 { width: 34px; } .w38 { width: 38px; } .w44 { width: 44px; } .w46 { width: 46px; } .w48 { width: 48px; } .w52 { width: 52px; }
.w58 { width: 58px; } .w62 { width: 62px; } .w70 { width: 70px; } .w72 { width: 72px; } .w77 { width: 77px; } .w92 { width: 92px; } .w94 { width: 94px; }
.off { color: #bdbdbd; }
.rows { margin-top: -4px; display: flex; flex-direction: column; }
.r { height: 27px; display: flex; align-items: center; white-space: nowrap; }
.icons-only { margin-left: 4px; }
.r-tri { margin-left: 9px; }
.slot20 { width: 20px; display: flex; justify-content: center; margin-right: 3px; }
.small-rows { margin-left: 3px; }
.small-rows .rt { margin-left: 4px; }
.know { width: 106px; padding-top: 7px; display: flex; flex-direction: column; gap: 15px; }
.kn { display: flex; align-items: center; gap: 4px; height: 24px; white-space: nowrap; }
.kgrid { display: grid; grid-template-columns: 26px 26px; grid-auto-rows: 27px; margin-top: -3px; justify-items: center; align-items: center; }
.rib-end { position: absolute; right: 6px; top: 91px; }

.selbar { height: 31px; flex: none; border-bottom: 1px solid #aaa; display: flex; align-items: center; position: relative; }
.menu-btn { margin-left: 8px; width: 90px; height: 24px; background: #c8e3ea; display: flex; align-items: center; flex: none; box-sizing: border-box; padding-left: 6px; }
.burger { display: flex; flex-direction: column; gap: 3px; margin-right: 6px; }
.burger i { display: block; width: 9px; height: 1px; background: #333; }
.menu-btn .tri { margin-left: 5px; }
.sel-sep { width: 1px; height: 23px; background: #ddd; margin-left: 5px; flex: none; }
.select { box-sizing: border-box; height: 25px; border: 1px solid #777; display: flex; align-items: center; justify-content: space-between; padding: 0 5px 0 2px; flex: none; }
.s1 { width: 182px; margin-left: 11px; } .s2 { width: 191px; margin-left: 0; }
.funnel { margin: 0 8px; width: 18px; height: 18px; }
.s3 { margin-left: 13px; }
.sel-end { position: absolute; right: 7px; top: 12px; }

.main { flex: none; height: 1156px; display: flex; border-bottom: 1px solid #aaa; box-sizing: border-box; }
.rail { width: 32px; box-sizing: border-box; background: #dcdcdc; border-right: 1px solid #aaa; display: flex; flex-direction: column; flex: none; align-items: flex-end; padding-right: 2px; }
.stub { width: 5px; height: 45px; background: #fff; border: 1px solid #bbb; box-sizing: border-box; margin-top: 83px; align-self: flex-start; margin-left: 2px; }
.rc { margin-top: 222px; width: 13px; height: 13px; }
.r1 { margin-top: 24px; } .r2 { margin-top: 19px; } .r3 { margin-top: 28px; } .r4 { margin-top: 29px; } .r5 { margin-top: 19px; }
.panel { width: 462px; box-sizing: border-box; border-right: 1px solid #aaa; padding-left: 6px; padding-right: 9px; flex: none; }
.panel-top { height: 33px; position: relative; display: flex; justify-content: flex-end; }
.max-ic { display: block; width: 14px; height: 10px; border: 1px solid #222; border-top-width: 3px; margin: 11px 5px 0 0; box-sizing: content-box; }
.table { border: 1px solid #ddd; box-sizing: border-box; height: 998px; }
.t-head { height: 23px; background: #f0f0f0; display: flex; border-bottom: 1px solid #ddd; line-height: 23px; font-size: 14px; }
.c1 { width: 304px; flex: none; padding-left: 76px; box-sizing: border-box; white-space: nowrap; overflow: hidden; }
.c2 { width: 88px; flex: none; border-left: 1px solid #e4e4e4; box-sizing: border-box; padding-left: 7px; }
.c3 { flex: 1; border-left: 1px solid #e4e4e4; box-sizing: border-box; padding-left: 7px; display: flex; align-items: center; }
.t-row .c3 { padding-left: 4px; }
.t-body { height: 952px; overflow: hidden; }
.t-row { height: 24px; box-sizing: border-box; border-bottom: 2px solid #ececec; display: flex; line-height: 22px; }
.t-row.odd { background: #f9f9f9; }
.t-scroll { height: 20px; background: #efefef; margin: 1px 1px 0; position: relative; }
.t-scroll span { position: absolute; left: 21px; top: 7px; width: 259px; height: 6px; background: #888; }
.splitter { background: #eee; border: 1px solid #aaa; box-sizing: border-box; margin-top: 1px; height: 5px; }
.sect { height: 28px; box-sizing: border-box; border-bottom: 2px solid #ccc; display: flex; align-items: center; }
.sect i { width: 0; height: 0; border-top: 6px solid transparent; border-bottom: 6px solid transparent; border-left: 6px solid #00617f; margin: 0 11px 0 12px; }
.sect span { font-size: 18px; color: #00708f; line-height: 26px; position: relative; top: 1px; }
.canvas { flex: 1; position: relative; }
.doc-tabs { height: 30px; box-sizing: border-box; border-bottom: 2px solid #005f87; display: flex; }
.dt { display: flex; align-items: center; height: 28px; flex: none; }
.dt:first-child { width: 109px; padding-left: 8px; gap: 4px; box-sizing: border-box; font-size: 15px; }
.dt.on { width: 220px; background: #005f87; color: #fff; padding-left: 5px; box-sizing: border-box; gap: 5px; font-size: 15.4px; white-space: nowrap; }
.dt.on svg:nth-of-type(2) { margin-left: 3px; }
.dt.on b { font-size: 14px; line-height: 20px; margin-left: 2px; }
.triad { position: absolute; left: 70px; top: 954px; width: 120px; height: 130px; }
.status { height: 22px; flex: none; background: #fff; }

.taskbar { height: 60px; flex: none; box-sizing: border-box; border-top: 1px solid #b3bccc; background: linear-gradient(90deg, #e6eff9 0%, #dfe8f7 25%, #d5e0f6 42%, #d5dff3 65%, #dde7f4 78%, #e6eff8 100%); display: flex; padding-left: 537px; position: relative; }
.t-slot { width: 55px; height: 59px; box-sizing: border-box; padding-bottom: 2px; display: flex; align-items: center; justify-content: center; position: relative; flex: none; }
.t-slot.active::before { content: ""; position: absolute; left: 3px; right: 3px; top: 5px; bottom: 5px; border-radius: 4px; background: rgba(255, 255, 255, .55); }
.t-slot svg { position: relative; }
.dot { position: absolute; left: 50%; bottom: 5px; width: 8px; height: 4px; margin-left: -4px; border-radius: 2px; background: #7b7f87; }
.bar { position: absolute; left: 50%; bottom: 5px; width: 20px; height: 4px; margin-left: -10px; border-radius: 2px; background: #0a78d6; }
.tray { position: absolute; left: 2150px; top: 0; height: 59px; display: flex; align-items: center; }
.tr { display: flex; justify-content: center; align-items: center; flex: none; }
.clock { width: 75px; box-sizing: border-box; padding-right: 2px; display: flex; flex-direction: column; align-items: flex-end; font-size: 14.5px; line-height: 20px; color: #111; }
.badge { width: 22px; height: 22px; margin-left: 7px; margin-top: -2px; border-radius: 50%; background: #0a63bb; color: #fff; font-size: 13px; line-height: 22px; text-align: center; flex: none; }
.mark { position: absolute; left: 2415px; top: 33px; font-size: 14.5px; line-height: 20px; color: rgba(100, 100, 100, .75); white-space: nowrap; }

.menu { position: absolute; background: #fff; border: 1px solid #aaa; box-sizing: border-box; padding: 2px 2px 3px; box-shadow: 3px 3px 3px rgba(0, 0, 0, .35); }
.menu-a { left: 8px; top: 199px; width: 156px; z-index: 3; }
.menu-b { left: 163px; top: 274px; width: 186px; z-index: 4; }
.menu-c { left: 348px; top: 391px; width: 168px; z-index: 5; }
.m-item { height: 24px; display: flex; align-items: center; border-top: 1px solid transparent; border-bottom: 1px solid transparent; background-clip: padding-box; box-sizing: border-box; white-space: nowrap; }
.m-item.hl { background-color: #add3de; }
.m-icon { width: 25px; display: flex; justify-content: center; flex: none; padding-right: 2px; box-sizing: border-box; }
.m-text { font-size: 14px; color: #222; }
.m-sep { height: 1px; background: #ddd; margin: 2px 9px 6px; }
.tip { position: absolute; left: 513px; top: 442px; width: 300px; height: 36px; box-sizing: border-box; padding-left: 7px; background: #fff; border: 1px solid #aaa; box-shadow: 3px 3px 3px rgba(0, 0, 0, .35); z-index: 6; font-size: 14.5px; line-height: 34px; white-space: nowrap; }
</style>
